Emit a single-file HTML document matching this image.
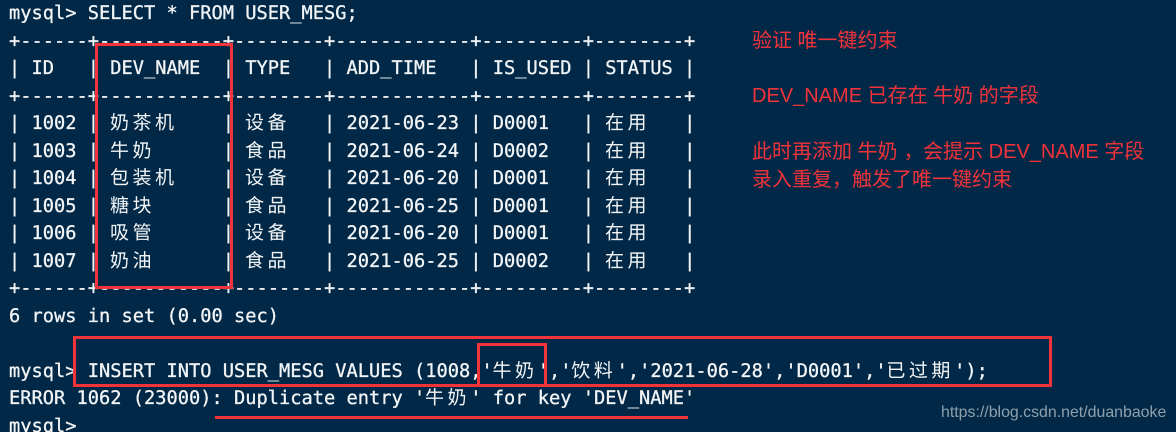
<!DOCTYPE html>
<html><head><meta charset="utf-8"><style>
html,body{margin:0;padding:0;background:#012947}
#w{position:relative;width:1176px;height:432px;overflow:hidden;background:#012947}
.l{position:absolute;left:9px;height:27px;line-height:27px;white-space:pre;font-family:"DejaVu Sans Mono","Noto Sans CJK SC",monospace;font-size:18.69px;color:#f2f4f6;text-rendering:geometricPrecision;-webkit-text-stroke:0.3px #f2f4f6}
.l i{font-style:normal;display:inline-block;width:22.5px;height:27px;line-height:27px;vertical-align:top;font-family:"Noto Sans CJK SC",sans-serif;font-size:19px;text-align:center;position:relative;left:-2px;top:-2px;-webkit-text-stroke:0}
.b{position:absolute;box-sizing:border-box;border:3px solid #f23339}
.t{position:absolute;left:752px;white-space:pre;font-family:"Liberation Sans","Noto Sans CJK SC",sans-serif;font-size:20px;line-height:28px;color:#f2323a}
</style></head><body><div id="w">
<div class="l" style="top:0px">mysql&gt; SELECT * FROM USER_MESG;</div>
<div class="l" style="top:28px">+------+-----------+--------+------------+---------+--------+</div>
<div class="l" style="top:55px">| ID   | DEV_NAME  | TYPE   | ADD_TIME   | IS_USED | STATUS |</div>
<div class="l" style="top:83px">+------+-----------+--------+------------+---------+--------+</div>
<div class="l" style="top:110px">| 1002 | <i>奶</i><i>茶</i><i>机</i>    | <i>设</i><i>备</i>   | 2021-06-23 | D0001   | <i>在</i><i>用</i>   |</div>
<div class="l" style="top:138px">| 1003 | <i>牛</i><i>奶</i>      | <i>食</i><i>品</i>   | 2021-06-24 | D0002   | <i>在</i><i>用</i>   |</div>
<div class="l" style="top:165px">| 1004 | <i>包</i><i>装</i><i>机</i>    | <i>设</i><i>备</i>   | 2021-06-20 | D0001   | <i>在</i><i>用</i>   |</div>
<div class="l" style="top:193px">| 1005 | <i>糖</i><i>块</i>      | <i>食</i><i>品</i>   | 2021-06-25 | D0001   | <i>在</i><i>用</i>   |</div>
<div class="l" style="top:220px">| 1006 | <i>吸</i><i>管</i>      | <i>设</i><i>备</i>   | 2021-06-20 | D0001   | <i>在</i><i>用</i>   |</div>
<div class="l" style="top:248px">| 1007 | <i>奶</i><i>油</i>      | <i>食</i><i>品</i>   | 2021-06-25 | D0002   | <i>在</i><i>用</i>   |</div>
<div class="l" style="top:275px">+------+-----------+--------+------------+---------+--------+</div>
<div class="l" style="top:303px">6 rows in set (0.00 sec)</div>
<div class="l" style="top:358px">mysql&gt; INSERT INTO USER_MESG VALUES (1008,'<i>牛</i><i>奶</i>','<i>饮</i><i>料</i>','2021-06-28','D0001','<i>已</i><i>过</i><i>期</i>');</div>
<div class="l" style="top:385px">ERROR 1062 (23000): Duplicate entry '<i>牛</i><i>奶</i>' for key 'DEV_NAME'</div>
<div class="l" style="top:413px">mysql&gt;</div>

<div class="b" style="left:95px;top:43px;width:138px;height:246px"></div>
<div class="b" style="left:73px;top:336px;width:979px;height:51px"></div>
<div class="b" style="left:477px;top:343px;width:70px;height:44px"></div>
<div class="b" style="left:215px;top:416px;width:473px;height:3px;border-width:3px 0 0"></div>

<div class="t" style="top:27px">验证 唯一键约束</div>
<div class="t" style="top:82px">DEV_NAME 已存在 牛奶 的字段</div>
<div class="t" style="top:138px">此时再添加 牛奶<span style="position:relative;left:6px">，</span> 会提示 DEV_NAME 字段</div>
<div class="t" style="top:166px">录入重复，触发了唯一键约束</div>

<div style="position:absolute;left:941px;top:404px;white-space:pre;font-family:'Liberation Sans',sans-serif;font-size:15.9px;line-height:18px;color:#8fa0ad">https://blog.csdn.net/duanbaoke</div>
</div></body></html>
